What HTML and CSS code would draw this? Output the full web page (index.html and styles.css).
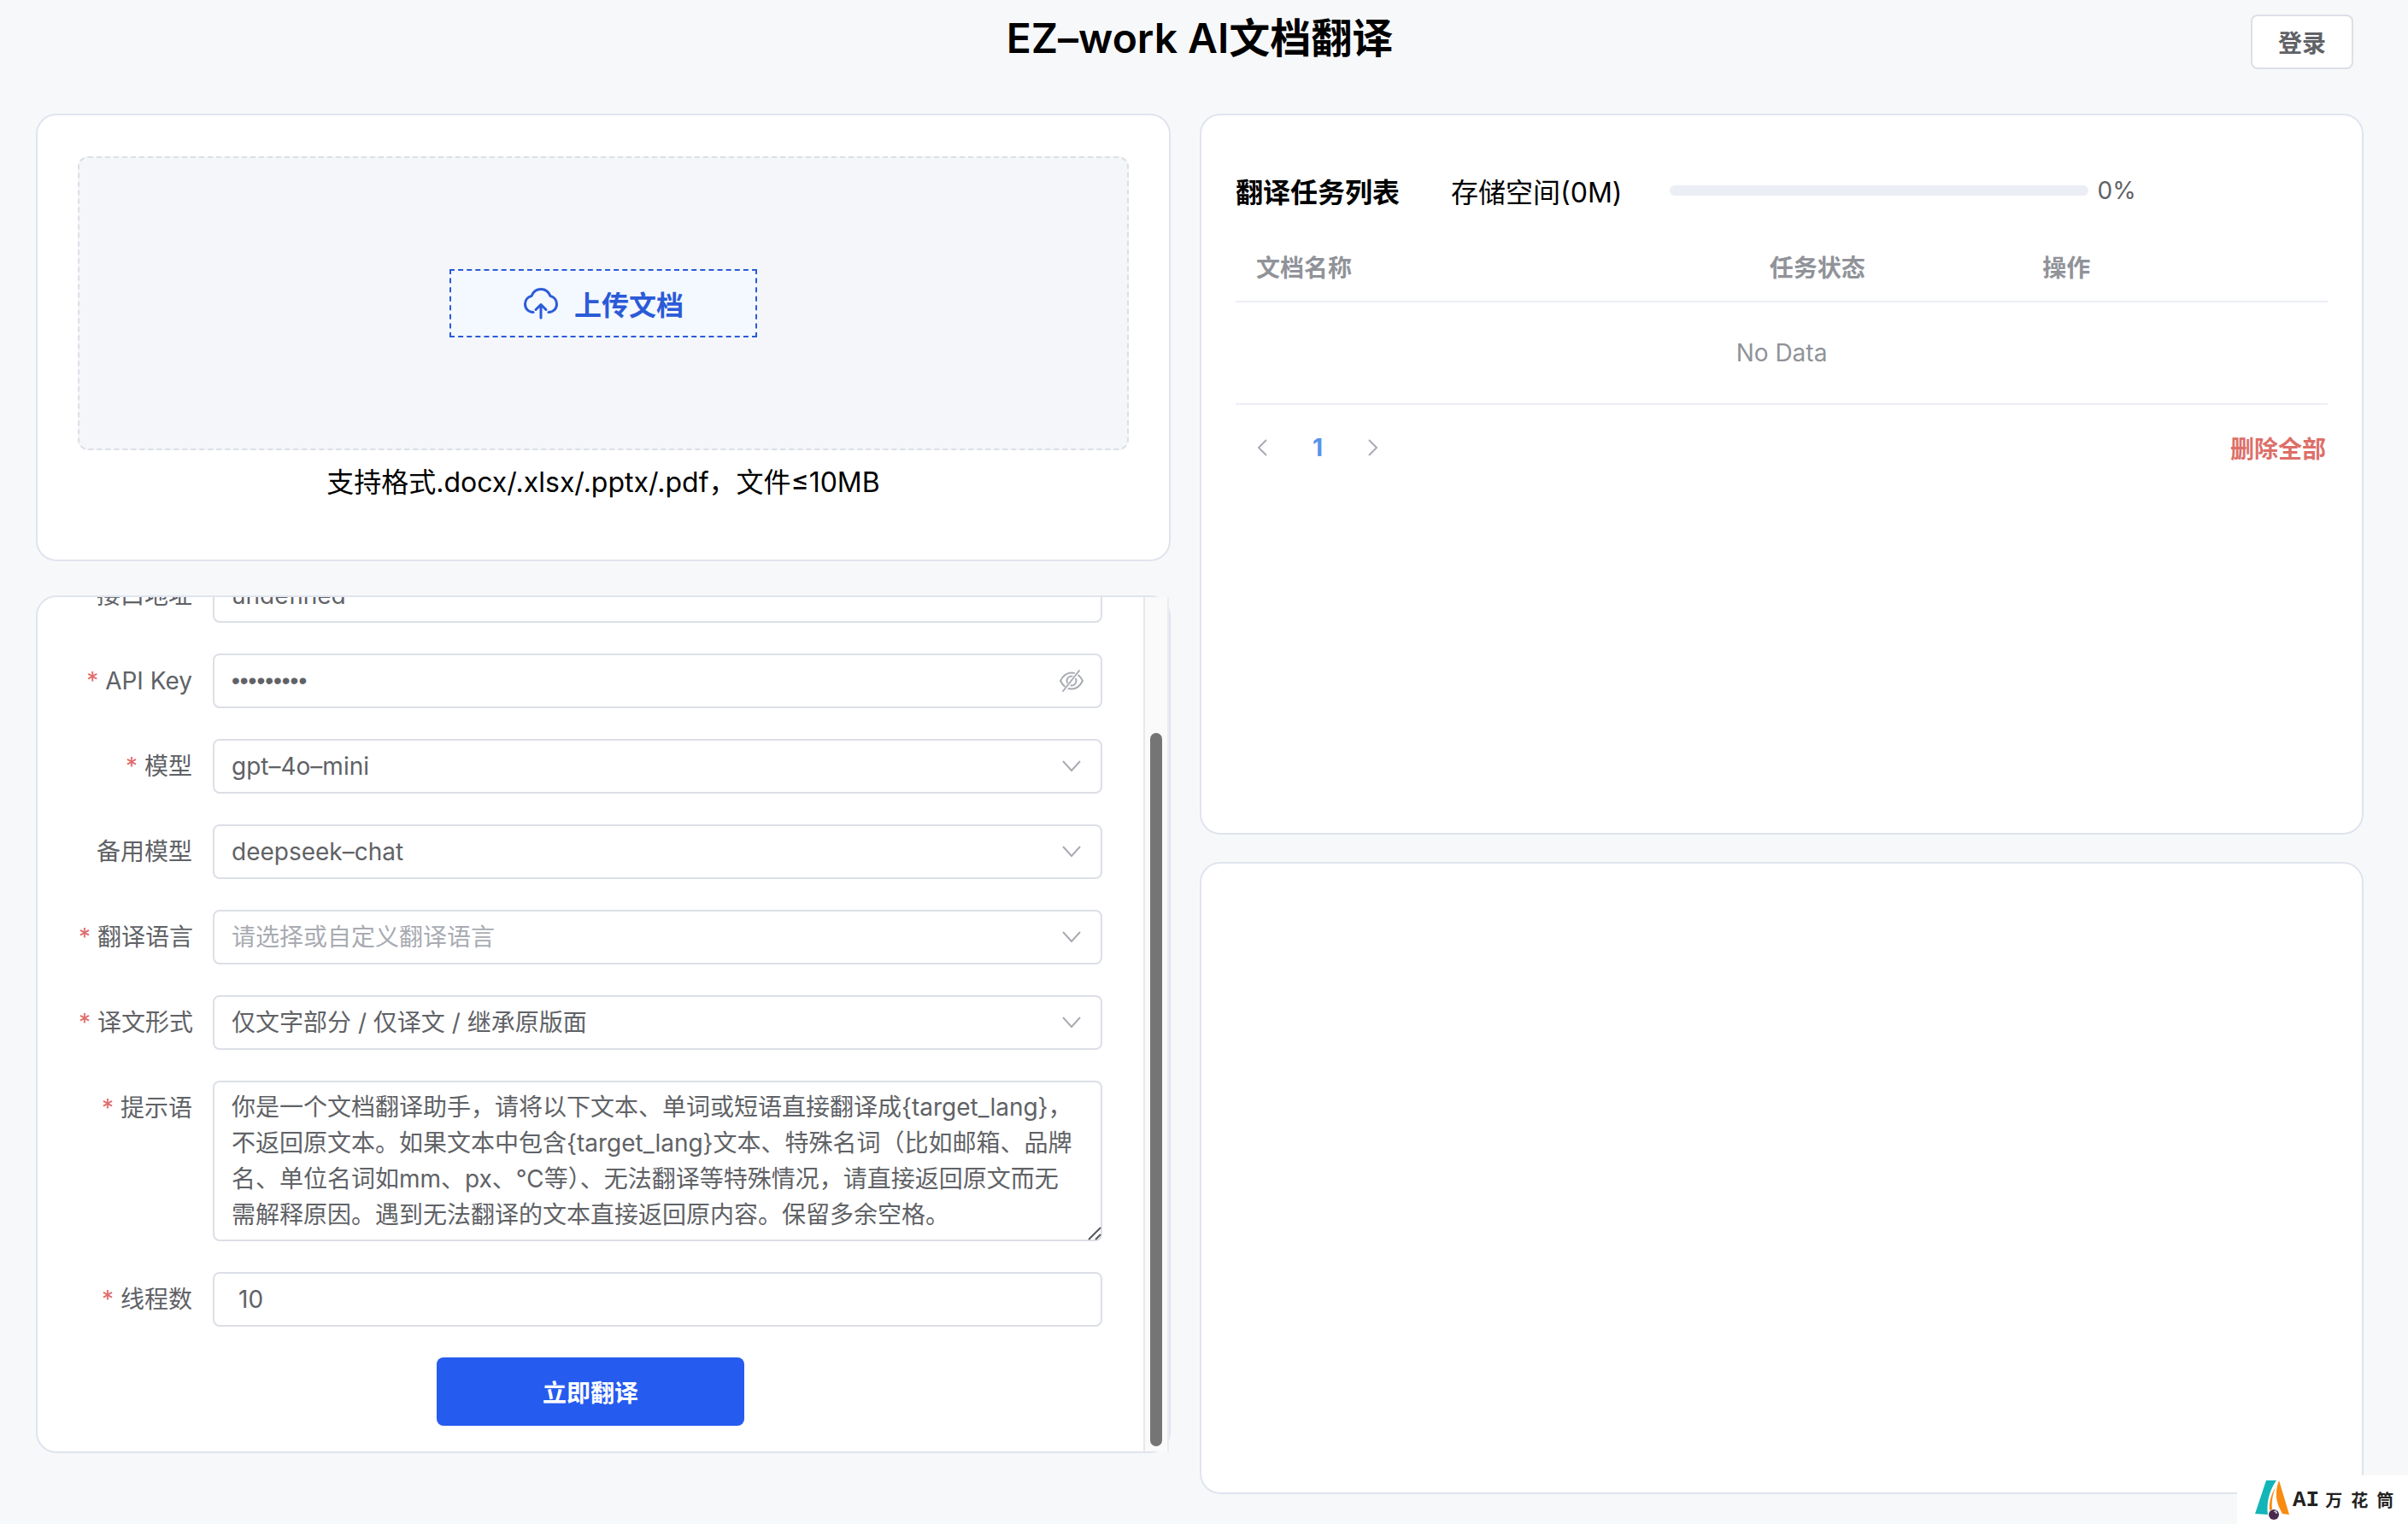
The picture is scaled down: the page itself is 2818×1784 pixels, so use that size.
FILE: index.html
```html
<!DOCTYPE html>
<html lang="zh-CN">
<head>
    <meta charset="UTF-8">
    <meta name="viewport" content="width=device-width, initial-scale=1.0">
    <title>EZ-work AI文档翻译</title>
    <link rel="stylesheet" href="styles.css">
</head>
<body>
    <header class="page-header">
        <h1>EZ–work AI文档翻译</h1>
        <button type="button" class="login-btn">登录</button>
    </header>

    <main class="container">
        <div class="column">
            <section class="card upload-card">
                <div class="upload-area">
                    <button type="button" class="upload-btn">
                        <svg class="upload-icon" viewBox="0 0 42 38" fill="none" stroke="currentColor" stroke-width="3" stroke-linecap="round" stroke-linejoin="round">
                            <path d="M12 29.5C6.500 29.500 2.500 25.500 2.500 20c0-4.500 3-8.500 7.500-9.500C12 5.500 16 2.500 21 2.500s9 3 11 8c4.500 1 7.500 5 7.500 9.500 0 5.500-4 9.500-9.500 9.500"/>
                            <path d="M21 36V21M15 26.500l6-6 6 6"/>
                        </svg>
                        <span>上传文档</span>
                    </button>
                </div>
                <p class="upload-tip">支持格式.docx/.xlsx/.pptx/.pdf，文件≤10MB</p>
            </section>

            <section class="card form-card">
                <form class="settings-form" onsubmit="return false">
                    <div class="form-item">
                        <label for="apiUrl">接口地址</label>
                        <input type="text" id="apiUrl" value="undefined">
                    </div>
                    <div class="form-item required">
                        <label for="apiKey">API Key</label>
                        <div class="field">
                            <input type="password" id="apiKey" class="key-input" value="123456789" autocomplete="off">
                            <svg class="field-icon eye-icon" viewBox="0 0 28 28" fill="none" stroke="currentColor" stroke-width="2" stroke-linecap="round">
                                <path d="M1 14c3-6 7.500-9.500 13-9.500S24 8 27 14c-3 6-7.500 9.500-13 9.500S4 20 1 14z"/>
                                <circle cx="14" cy="14" r="5.500"/>
                                <path d="M22 3L5 26" stroke="#fff" stroke-width="4"/>
                                <path d="M23 2L4 26"/>
                            </svg>
                        </div>
                    </div>
                    <div class="form-item required">
                        <label for="model">模型</label>
                        <div class="field">
                            <select id="model"><option>gpt–4o–mini</option></select>
                            <svg class="field-icon" viewBox="0 0 28 28"><path d="M4 8l10 11L24 8"/></svg>
                        </div>
                    </div>
                    <div class="form-item">
                        <label for="backupModel">备用模型</label>
                        <div class="field">
                            <select id="backupModel"><option>deepseek–chat</option></select>
                            <svg class="field-icon" viewBox="0 0 28 28"><path d="M4 8l10 11L24 8"/></svg>
                        </div>
                    </div>
                    <div class="form-item required">
                        <label for="lang">翻译语言</label>
                        <div class="field">
                            <select id="lang" class="placeholder"><option>请选择或自定义翻译语言</option></select>
                            <svg class="field-icon" viewBox="0 0 28 28"><path d="M4 8l10 11L24 8"/></svg>
                        </div>
                    </div>
                    <div class="form-item required">
                        <label for="outputType">译文形式</label>
                        <div class="field">
                            <select id="outputType"><option>仅文字部分 / 仅译文 / 继承原版面</option></select>
                            <svg class="field-icon" viewBox="0 0 28 28"><path d="M4 8l10 11L24 8"/></svg>
                        </div>
                    </div>
                    <div class="form-item required">
                        <label for="prompt">提示语</label>
                        <div class="field">
                            <textarea id="prompt" rows="4">你是一个文档翻译助手，请将以下文本、单词或短语直接翻译成{target_lang}，不返回原文本。如果文本中包含{target_lang}文本、特殊名词（比如邮箱、品牌名、单位名词如mm、px、℃等）、无法翻译等特殊情况，请直接返回原文而无需解释原因。遇到无法翻译的文本直接返回原内容。保留多余空格。</textarea>
                            <svg class="resize-icon" viewBox="0 0 16 16"><path d="M1 15L15 1M9 15l6-6"/></svg>
                        </div>
                    </div>
                    <div class="form-item required">
                        <label for="threads">线程数</label>
                        <input type="text" id="threads" class="threads-input" value="10">
                    </div>
                    <button type="submit" class="submit-btn">立即翻译</button>
                </form>
                <div class="scrollbar"><div class="thumb"></div></div>
            </section>
        </div>

        <div class="column">
            <section class="card task-card">
                <div class="task-header">
                    <h2>翻译任务列表</h2>
                    <span class="storage">存储空间(0M)</span>
                    <div class="progress"></div>
                    <span class="percent">0%</span>
                </div>
                <table class="task-table">
                    <thead>
                        <tr>
                            <th class="col-name">文档名称</th>
                            <th class="col-status">任务状态</th>
                            <th>操作</th>
                        </tr>
                    </thead>
                    <tbody>
                        <tr>
                            <td colspan="3">No Data</td>
                        </tr>
                    </tbody>
                </table>
                <div class="task-footer">
                    <nav class="pagination">
                        <button type="button" aria-label="上一页"><svg viewBox="0 0 24 24"><path d="M16 3l-9 9 9 9"/></svg></button>
                        <button type="button" class="current">1</button>
                        <button type="button" aria-label="下一页"><svg viewBox="0 0 24 24"><path d="M8 3l9 9-9 9"/></svg></button>
                    </nav>
                    <button type="button" class="delete-all">删除全部</button>
                </div>
            </section>
            <section class="card result-card"></section>
        </div>
    </main>

    <div class="watermark">
        <svg class="watermark-logo" viewBox="0 0 40 48">
            <path d="M13 1h12C17 12 13 27 15 41L0 40z" fill="#14b5b8"/>
            <path d="M28 1c-3 8-4 17-2 25 1 5 4 10 6 14l8 1L29 4z" fill="#f98b12"/>
            <path d="M24 9c-5 8-8 17-7 27l3-1c-1-10 1-18 4-26z" fill="#f98b12"/>
            <circle cx="22" cy="41" r="6" fill="#4a2b4f"/>
            <path d="M22 37l4 2M24 36l1 4" stroke="#e6dfe8" stroke-width="1"/>
        </svg>
        <span class="latin">AI</span><span>万</span><span>花</span><span>筒</span>
    </div>
</body>
</html>
```

FILE: styles.css
```css
* {
    box-sizing: border-box;
}

body {
    margin: 0;
    min-height: 100vh;
    display: flex;
    flex-direction: column;
    font-family: Inter, "Noto Sans CJK SC", sans-serif;
    font-size: 28px;
    color: #606266;
    background: #f7f8fa;
}

button, input, select, textarea {
    font-family: inherit;
    font-size: 28px;
    color: #606266;
}

button {
    padding: 0;
    border: none;
    background: none;
    cursor: pointer;
}

.page-header {
    height: 133px;
    padding: 17px 64px 0 54px;
    display: grid;
    grid-template-columns: 1fr auto 1fr;
    align-items: start;
}

h1 {
    grid-column: 2;
    margin: 0;
    font-size: 48px;
    line-height: 56px;
    font-weight: 600;
    color: #000;
}

.login-btn {
    justify-self: end;
    width: 120px;
    height: 64px;
    border: 2px solid #dcdfe6;
    border-radius: 8px;
    background: #fff;
    font-weight: 600;
}

.container {
    flex: 1;
    display: grid;
    grid-template-columns: 1328fr 1362fr;
    gap: 34px;
    padding: 0 52px 35px 42px;
}

.column {
    display: flex;
    flex-direction: column;
    min-width: 0;
}

.card {
    background: #fff;
    border: 2px solid #e0e4ee;
    border-radius: 24px;
}

/* upload */
.upload-card {
    padding: 48px 47px 66px;
    margin-bottom: 40px;
}

.upload-area {
    height: 344px;
    display: flex;
    align-items: center;
    justify-content: center;
    background: #f4f6fa;
    border: 2px dashed #dcdfe6;
    border-radius: 12px;
}

.upload-btn {
    width: 360px;
    height: 80px;
    display: flex;
    align-items: center;
    justify-content: center;
    gap: 18px;
    border: 2px dashed #2b5bd7;
    background: #f4f8ff;
    color: #2b5bd7;
    font-size: 32px;
    font-weight: 700;
}

.upload-icon {
    width: 42px;
    height: 38px;
}

.upload-tip {
    margin: 14px 0 0;
    font-size: 32px;
    line-height: 48px;
    text-align: center;
    color: #000;
}

/* settings form */
.form-card {
    height: 1004px;
    display: flex;
}

/* shown scrolled to its end, the first rows run off the top */
.settings-form {
    flex: 1;
    min-width: 0;
    display: flex;
    flex-direction: column;
    justify-content: flex-end;
    gap: 36px;
    padding: 0 48px 30px;
    overflow: hidden;
}

.form-item {
    display: grid;
    grid-template-columns: 133px 1fr;
    gap: 24px;
    flex-shrink: 0;
}

.form-item label {
    line-height: 64px;
    text-align: right;
    white-space: nowrap;
}

.required label::before {
    content: "*";
    margin-right: 8px;
    color: #e06c6c;
}

.field {
    position: relative;
    display: flex;
}

.form-item input, .form-item select, .form-item textarea {
    width: 100%;
    height: 64px;
    padding: 0 20px;
    border: 2px solid #dcdfe6;
    border-radius: 8px;
    background: #fff;
    outline: none;
}

.form-item .key-input {
    font-family: "Liberation Sans", sans-serif;
}

.form-item select {
    appearance: none;
}

.form-item select.placeholder {
    color: #a8abb2;
}

.form-item textarea {
    height: 188px;
    padding: 8px 28px 8px 20px;
    line-height: 42px;
    resize: none;
    overflow: hidden;
}

.form-item .threads-input {
    padding: 0 28px;
}

.field-icon {
    position: absolute;
    right: 22px;
    top: 18px;
    width: 28px;
    height: 28px;
    fill: none;
    stroke: #a8abb2;
    stroke-width: 2;
    pointer-events: none;
}

.resize-icon {
    position: absolute;
    right: 1px;
    bottom: 1px;
    width: 16px;
    height: 16px;
    stroke: #55585c;
    stroke-width: 2;
}

.submit-btn {
    flex-shrink: 0;
    align-self: center;
    width: 360px;
    height: 80px;
    border-radius: 8px;
    background: #265bef;
    color: #fff;
    font-weight: 700;
}

.scrollbar {
    width: 30px;
    display: flex;
    flex-direction: column;
    justify-content: flex-end;
    align-items: center;
    padding-bottom: 6px;
    background: #fafafa;
    border-left: 2px solid #e8e8ea;
    border-right: 2px solid #ececf0;
}

.thumb {
    width: 14px;
    height: 84%;
    border-radius: 7px;
    background: #757575;
}

/* task list */
.task-card {
    min-height: 844px;
    margin-bottom: 32px;
    padding: 64px 40px 0;
}

.task-header {
    display: flex;
    align-items: center;
    height: 48px;
    font-size: 32px;
    color: #000;
}

h2 {
    margin: 0 60px 0 0;
    font-size: 32px;
    font-weight: 700;
}

.progress {
    flex: 0 1 490px;
    height: 12px;
    margin: 0 10px 0 56px;
    border-radius: 6px;
    background: #ebeef5;
}

.percent {
    font-size: 28px;
    color: #606266;
}

.task-table {
    width: 100%;
    margin-top: 24px;
    border-collapse: collapse;
    table-layout: fixed;
    color: #909399;
}

.task-table th {
    height: 82px;
    padding: 0 24px;
    text-align: left;
    font-weight: 600;
    border-bottom: 2px solid #ebeef5;
}

.task-table td {
    height: 120px;
    padding: 0;
    text-align: center;
    border-bottom: 2px solid #ebeef5;
}

.col-name {
    width: 47%;
}

.col-status {
    width: 25%;
}

.task-footer {
    display: flex;
    justify-content: space-between;
    align-items: center;
    margin-top: 18px;
    padding-right: 2px;
    height: 64px;
}

.pagination {
    display: flex;
}

.pagination button {
    width: 64px;
    height: 64px;
    display: flex;
    align-items: center;
    justify-content: center;
}

.pagination svg {
    width: 24px;
    height: 24px;
    fill: none;
    stroke: #a8abb2;
    stroke-width: 2;
}

.pagination .current {
    color: #5594ee;
    font-weight: 700;
}

.delete-all {
    color: #dd6f69;
    font-weight: 600;
}

.result-card {
    flex: 1;
}

.watermark {
    position: fixed;
    right: 0;
    bottom: 0;
    width: 200px;
    height: 57px;
    display: flex;
    align-items: center;
    gap: 4px;
    padding-left: 21px;
    background: #fff;
    color: #222;
    font-size: 20px;
    font-weight: 700;
}

.watermark span {
    padding: 0 3px;
}

.watermark .latin {
    padding: 0;
    font-family: "Liberation Mono", monospace;
    font-size: 26px;
}

.watermark-logo {
    flex: none;
    width: 40px;
    height: 48px;
}
```
